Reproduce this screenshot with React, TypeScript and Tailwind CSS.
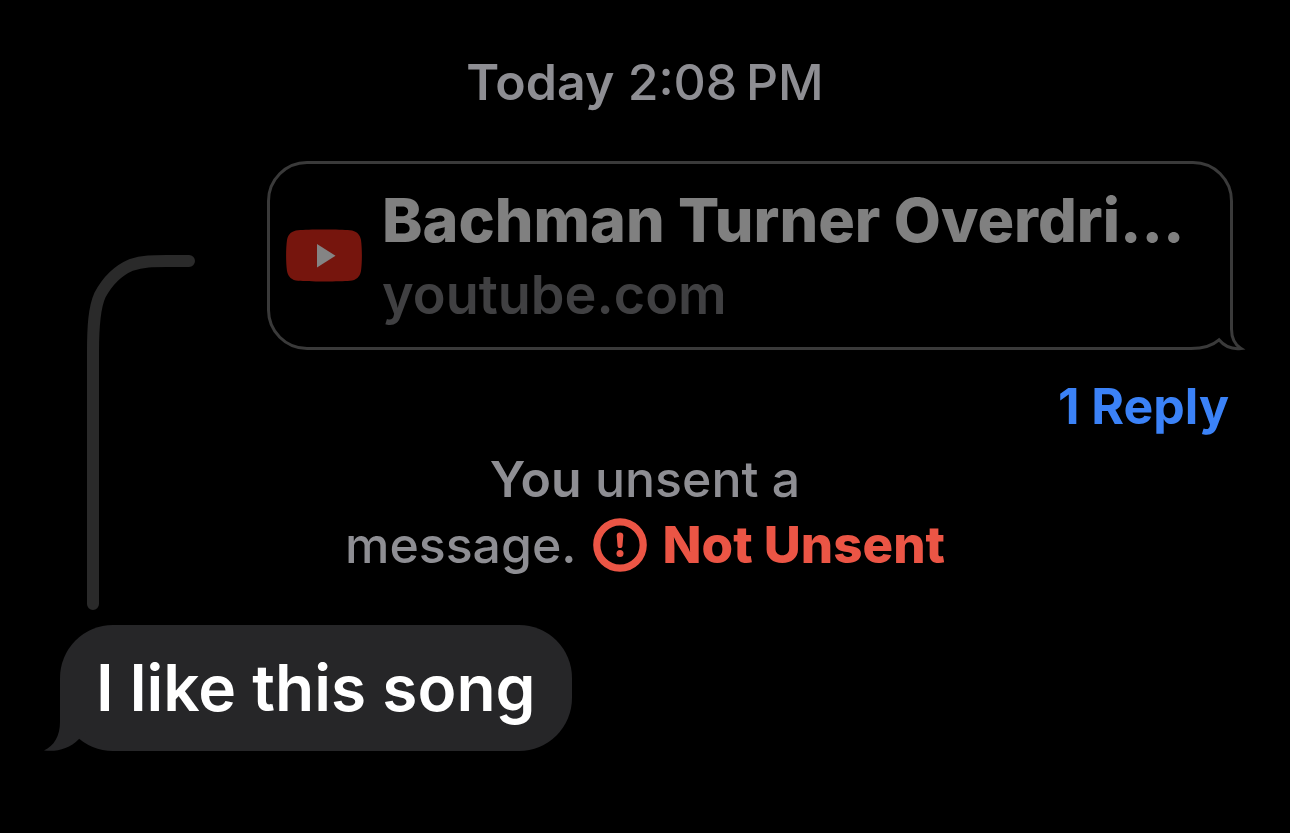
function ThreadLine() {
  return (
    <svg
      className="mt-[94px] h-[355px] w-[108px] shrink-0"
      viewBox="87 255 108 355"
      fill="none"
      stroke="#2a2a2a"
      strokeWidth="12"
      strokeLinecap="round"
      aria-hidden="true"
    >
      <path d="M93 604V352C93 328 94 308 100 295C107 282 117 271 131 265C143 261 153 261 167 261H189" />
    </svg>
  );
}

function YouTubeIcon() {
  return (
    <svg className="h-[53px] w-[76px] shrink-0" viewBox="0 0 76 53" aria-hidden="true">
      <path
        d="M38 .5C50 .5 58 .7 64 1.200C70 1.700 74 5 75 11C76.200 20 76.200 33 75 42C74 48 70 51.300 64 51.800C58 52.300 50 52.500 38 52.500S18 52.300 12 51.800C6 51.300 2 48 1 42C-.2 33-.2 20 1 11C2 5 6 1.700 12 1.200C18 .7 26 .5 38 .5Z"
        fill="#76150d"
      />
      <path d="M31 15V38.500L49.500 26.700Z" fill="#848484" />
    </svg>
  );
}

function OutlineTail() {
  return (
    <svg
      className="absolute -right-[17px] -bottom-[5px] h-[46px] w-[57px]"
      viewBox="1190 306 57 46"
      fill="none"
      aria-hidden="true"
    >
      <path d="M1192 306H1247V352H1192Z" fill="#000" />
      <path
        d="M1231.500 305V329C1231.500 338 1234.500 344.500 1241 348.500C1232 349.500 1224.500 346.500 1219 339.800C1212 346 1203 348.500 1191 348.500"
        stroke="#3a3a3a"
        strokeWidth="3"
        strokeMiterlimit="4"
      />
    </svg>
  );
}

function AlertIcon() {
  return (
    <svg className="size-[54px] shrink-0" viewBox="0 0 54 54" aria-hidden="true">
      <circle cx="27" cy="27" r="23.200" fill="none" stroke="#eb5545" strokeWidth="7.200" />
      <path
        d="M23.700 17.500C23.700 15.500 25 14.400 27 14.400S30.300 15.500 30.300 17.500L29.500 27.700C29.400 29.200 28.500 30 27 30S24.600 29.200 24.500 27.700Z"
        fill="#eb5545"
      />
      <circle cx="27" cy="35.500" r="3.500" fill="#eb5545" />
    </svg>
  );
}

export default function App() {
  return (
    <main className="min-h-screen bg-black pt-[49px] pb-20 font-['Inter',sans-serif] text-[50px] leading-[66px] font-medium text-[#8e8e93]">
      <p className="text-center">
        <strong className="font-semibold">Today</strong> 2:08{"\u2009"}PM
      </p>

      <section className="mt-[46px] flex items-start pl-[87px]">
        <ThreadLine />
        <div className="min-w-0 flex-1">
          <a
            href="https://youtube.com"
            className="relative mr-[57px] ml-[72px] flex h-[189px] items-center gap-5 rounded-[40px] border-3 border-[#3a3a3a] pr-4 pl-4"
          >
            <YouTubeIcon />
            <span className="min-w-0 flex-1">
              <span className="block truncate text-[61px] leading-[78px] font-extrabold text-[#808080]">
                Bachman Turner Overdri...
              </span>
              <span className="block text-[54px] leading-[72px] font-semibold text-[#404042]">
                youtube.com
              </span>
            </span>
            <OutlineTail />
          </a>
          <div className="mt-[23px] flex justify-end pr-[61px]">
            <button type="button" className="font-bold text-[#3b82f7]">
              1 Reply
            </button>
          </div>
          <div className="mt-[7px] pr-[195px] text-center">
            <p>
              <strong className="font-semibold">You</strong> unsent a
            </p>
            <p className="flex items-center justify-center">
              message.
              <button
                type="button"
                className="ml-4 flex items-center gap-4 text-[51px] font-extrabold text-[#eb5545]"
              >
                <AlertIcon />
                Not Unsent
              </button>
            </p>
          </div>
        </div>
      </section>

      <div className="relative mt-[15px] ml-[60px] flex h-[126px] w-fit items-center rounded-[53px] bg-[#262628] px-9 text-[64px] font-semibold text-white">
        <svg
          className="absolute bottom-0 -left-4 h-[56px] w-[50px]"
          viewBox="44 695 50 56"
          aria-hidden="true"
        >
          <path
            d="M60 695V722C60 736 54 746 44 750.500C57 752 69 749 79 739L94 720V695Z"
            fill="#262628"
          />
        </svg>
        <p className="relative">I like this song</p>
      </div>
    </main>
  );
}
